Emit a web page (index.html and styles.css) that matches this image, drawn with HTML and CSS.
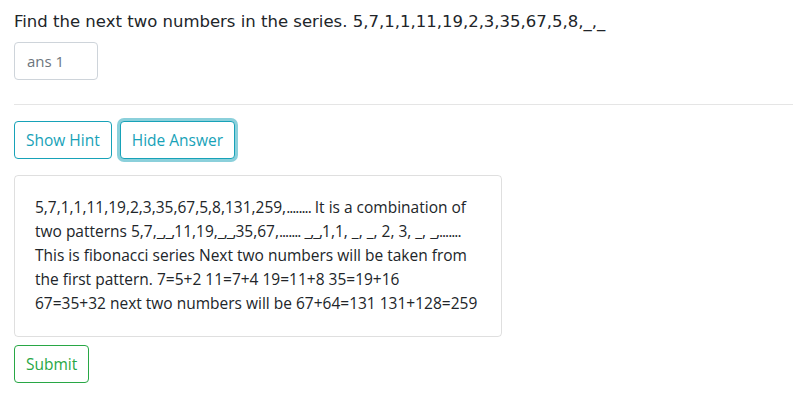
FILE: index.html
```html
<!DOCTYPE html>
<html>
<head>
<meta charset="utf-8">
<link rel="stylesheet" href="styles.css">
</head>
<body>
<div class="page">
  <p class="question">Find the next two numbers in the series. 5,7,1,1,11,19,2,3,35,67,5,8,_,_</p>
  <input class="answer-input" type="text" placeholder="ans 1">
  <hr class="divider">
  <div class="actions">
    <button class="btn btn-info">Show Hint</button>
    <button class="btn btn-info focused">Hide Answer</button>
  </div>
  <div class="card">
    <p class="card-text">5,7,1,1,11,19,2,3,35,67,5,8,131,259,<span class="tight">........</span> It is a combination of<br>two patterns 5,7,<span class="tight">_,_,</span>11,19,<span class="tight">_,_,</span>35,67,<span class="tight">.......</span> <span class="tight">_,_,</span>1,1, _, _, 2, 3, _, <span class="tight">_,.......</span><br>This is fibonacci series Next two numbers will be taken from<br>the first pattern. 7=5+2 11=7+4 19=11+8 35=19+16<br>67=35+32 next two numbers will be 67+64=131 131+128=259</p>
  </div>
  <button class="btn btn-success">Submit</button>
</div>
</body>
</html>
```
FILE: styles.css
```css
html, body {
  margin: 0;
  padding: 0;
  background: #fff;
}
.page {
  padding: 10px 0 0 14px;
  display: flex;
  flex-direction: column;
  align-items: flex-start;
  font-family: "Open Sans", "Noto Sans", sans-serif;
  color: #212529;
}
.question {
  margin: 0 0 8px 0;
  font-family: "DejaVu Sans", Verdana, sans-serif;
  font-size: 16.5px;
  line-height: 24px;
  color: #212529;
}
.answer-input {
  width: 84px;
  height: 38px;
  box-sizing: border-box;
  border: 1px solid #ced4da;
  border-radius: 4px;
  padding: 6px 12px;
  font-family: "Open Sans", sans-serif;
  font-size: 15px;
  color: #495057;
  margin: 0;
}
.answer-input::placeholder {
  color: #6c757d;
}
.divider {
  align-self: stretch;
  margin: 24px 0 16px 0;
  border: 0;
  border-top: 1px solid #e5e5e5;
  height: 0;
}
.actions {
  display: flex;
  gap: 8px;
  margin-bottom: 16px;
}
.btn {
  height: 38px;
  box-sizing: border-box;
  padding: 0 11px;
  border-radius: 4px;
  background: #fff;
  font-family: "Open Sans", sans-serif;
  font-size: 15.5px;
  line-height: 35px;
  cursor: pointer;
}
.btn-info {
  border: 1px solid #17a2b8;
  color: #17a2b8;
}
.btn-info.focused {
  box-shadow: 0 0 0 3px rgba(23, 162, 184, 0.5);
}
.btn-success {
  border: 1px solid #28a745;
  color: #28a745;
}
.card {
  width: 488px;
  box-sizing: border-box;
  border: 1px solid rgba(0, 0, 0, 0.125);
  border-radius: 4px;
  padding: 19px 20px 21px 20px;
  margin-bottom: 8px;
}
.card-text {
  margin: 0;
  font-size: 15.5px;
  line-height: 24px;
  color: #212529;
  white-space: nowrap;
}
.tight {
  letter-spacing: -1px;
}
```
